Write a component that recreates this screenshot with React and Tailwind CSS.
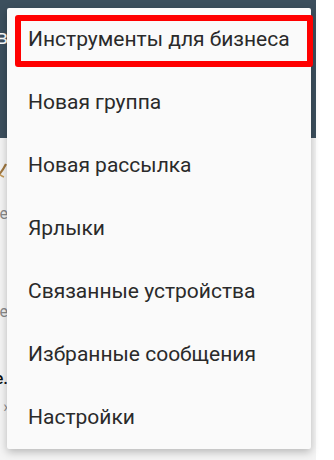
import React from 'react';

const items = [
  'Инструменты для бизнеса',
  'Новая группа',
  'Новая рассылка',
  'Ярлыки',
  'Связанные устройства',
  'Избранные сообщения',
  'Настройки',
];

const App = () => {
  return (
    <div
      className="relative w-[334px] h-[460px] overflow-hidden bg-white flex"
      style={{ fontFamily: 'Roboto, "Noto Sans", sans-serif' }}
    >
      {/* screen behind the menu */}
      <div className="w-[316px] h-full flex flex-col bg-[#f4f4f4]">
        <div className="h-[138px] bg-[#3c4f5d] flex">
          <div className="w-[8px] overflow-hidden flex justify-end pt-[27px]">
            <span className="text-white text-[21px] leading-none whitespace-nowrap">в</span>
          </div>
        </div>
        <div className="flex-1 flex">
          <div className="w-[8px] overflow-hidden flex flex-col items-end">
            <div className="mt-[22px] h-[22px] w-[10px] flex justify-end">
              <svg width="10" height="22" viewBox="0 0 10 22">
                <path d="M-2 18 C2 14 5 10 8 4" stroke="#a0773f" strokeWidth="2.2" fill="none" />
                <path d="M-1 12 C1 14 3 16 6 17" stroke="#c49a5a" strokeWidth="1.6" fill="none" />
              </svg>
            </div>
            <span className="mt-[24px] text-[16px] leading-none text-[#8a8a8a] whitespace-nowrap">е</span>
            <span className="mt-[82px] text-[16px] leading-none text-[#8a8a8a] whitespace-nowrap">е</span>
            <span className="mt-[50px] text-[17px] leading-none font-medium text-[#111] whitespace-nowrap">е.</span>
            <span className="mt-[12px] text-[16px] leading-none text-[#8a8a8a] whitespace-nowrap">›</span>
          </div>
        </div>
      </div>
      <div className="flex-1 bg-white" />

      {/* overflow menu */}
      <div className="absolute left-[7px] top-[8px] w-[304px] bg-[#fafafa] rounded-[2px] shadow-[0_3px_8px_rgba(0,0,0,0.25)]">
        {items.map((label) => (
          <div
            key={label}
            className="h-[63px] flex items-center pl-[21px] text-[21px] text-[#2a2a2a] whitespace-nowrap"
          >
            {label}
          </div>
        ))}
      </div>

      {/* highlight frame */}
      <div className="absolute left-[15px] top-[15px] w-[298px] h-[52px] border-[6px] border-[#ff0000] rounded-[3px]" />
    </div>
  );
};

export default App;
